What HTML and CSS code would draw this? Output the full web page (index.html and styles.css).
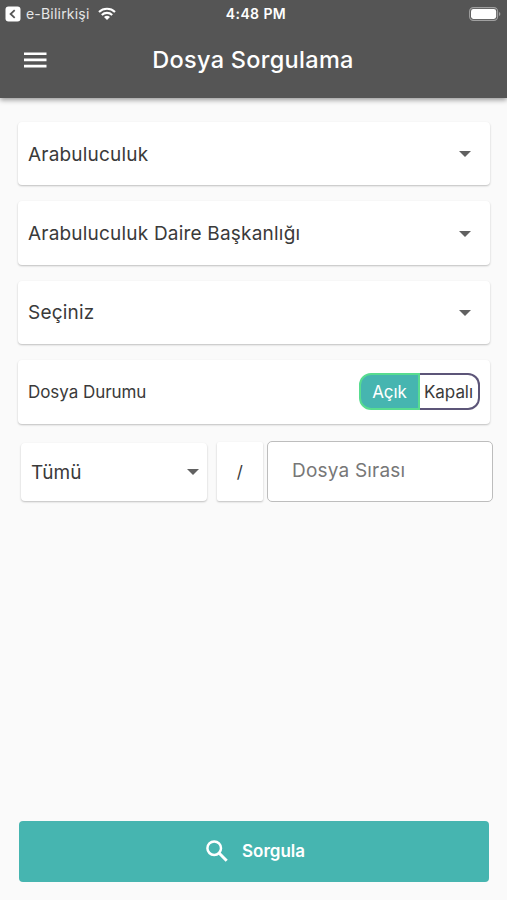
FILE: index.html
```
<!DOCTYPE html>
<html lang="tr">
<head>
    <meta charset="UTF-8">
    <meta name="viewport" content="width=device-width, initial-scale=1.0">
    <title>Dosya Sorgulama</title>
    <link rel="stylesheet" href="styles.css">
</head>
<body>
    <!-- Header -->
    <header class="header">
        <div class="status-bar">
            <div class="status-left">
                <svg class="back-icon" width="16" height="16" viewBox="0 0 16 16">
                    <rect x="0.5" y="0.5" width="15" height="15" rx="3" fill="#fff"/>
                    <path d="M9.7 4.2L5.6 8l4.1 3.8" fill="none" stroke="#555" stroke-width="1.8"/>
                </svg>
                <span class="back-app">e-Bilirkişi</span>
                <svg class="wifi-icon" width="18" height="14" viewBox="0 0 18 14">
                    <path d="M1 5a11.6 11.6 0 0 1 16 0M3.8 8a7.5 7.5 0 0 1 10.4 0" fill="none" stroke="#fff" stroke-width="2.1"/>
                    <path d="M9 13L6 10.1a4.4 4.4 0 0 1 6 0z" fill="#fff"/>
                </svg>
            </div>
            <span class="clock">4:48 PM</span>
            <svg class="battery-icon" width="32" height="14" viewBox="0 0 32 14">
                <rect x="0.6" y="0.6" width="28" height="12.8" rx="3.8" fill="none" stroke="#a0a0a0" stroke-width="1.1"/>
                <rect x="2" y="2" width="25.2" height="10" rx="2.4" fill="#fff"/>
                <path d="M30 5v4q1.4-.6 1.4-2T30 5z" fill="#a0a0a0"/>
            </svg>
        </div>
        <div class="app-bar">
            <svg class="menu-icon" width="24" height="16" viewBox="0 0 24 16">
                <path d="M1 1.7h22.5M1 7.9h22.5M1 14.1h22.5" stroke="#fff" stroke-width="2.6"/>
            </svg>
            <h1 class="title">Dosya Sorgulama</h1>
        </div>
    </header>

    <!-- Search Form -->
    <main class="form">
        <div class="card">
            <span>Arabuluculuk</span>
            <svg class="arrow" width="12" height="6" viewBox="0 0 12 6"><path d="M0 0h12L6 6z" fill="#616161"/></svg>
        </div>
        <div class="card">
            <span>Arabuluculuk Daire Başkanlığı</span>
            <svg class="arrow" width="12" height="6" viewBox="0 0 12 6"><path d="M0 0h12L6 6z" fill="#616161"/></svg>
        </div>
        <div class="card">
            <span>Seçiniz</span>
            <svg class="arrow" width="12" height="6" viewBox="0 0 12 6"><path d="M0 0h12L6 6z" fill="#616161"/></svg>
        </div>
        <div class="card status-card">
            <span class="status-label">Dosya Durumu</span>
            <div class="toggle">
                <span class="toggle-item active">Açık</span>
                <span class="toggle-item">Kapalı</span>
            </div>
        </div>
        <div class="file-row">
            <div class="card year">
                <span>Tümü</span>
                <svg class="arrow" width="12" height="6" viewBox="0 0 12 6"><path d="M0 0h12L6 6z" fill="#616161"/></svg>
            </div>
            <div class="card slash">/</div>
            <div class="file-input">Dosya Sırası</div>
        </div>
    </main>

    <!-- Submit -->
    <div class="submit">
        <svg class="search-icon" width="22" height="22" viewBox="0 0 22 22">
            <circle cx="8.2" cy="8.2" r="6.8" fill="none" stroke="#fff" stroke-width="2.5"/>
            <path d="M13 13l7.7 7.7" stroke="#fff" stroke-width="3"/>
        </svg>
        <span>Sorgula</span>
    </div>
</body>
</html>
```

FILE: styles.css
```
* {
    box-sizing: border-box;
}
body {
    margin: 0;
    height: 900px;
    display: flex;
    flex-direction: column;
    background: #fafafa;
    color: #3a3a3a;
    font-family: Inter, "Liberation Sans", sans-serif;
    font-size: 19px;
    overflow: hidden;
}
.header {
    height: 98px;
    background: #555;
    color: #fff;
    box-shadow: 0 2px 5px rgba(0, 0, 0, 0.4);
}
.status-bar {
    display: grid;
    grid-template-columns: 1fr auto 1fr;
    align-items: center;
    height: 27px;
    padding: 0 6px 0 5px;
}
.status-left {
    display: flex;
    align-items: center;
}
.back-app {
    margin: 0 9px 0 5px;
    font-size: 14px;
    color: #e6e6e6;
    letter-spacing: 0.2px;
}
.clock {
    padding-left: 6px;
    font-size: 14px;
    font-weight: 600;
    letter-spacing: 0.4px;
}
.battery-icon {
    justify-self: end;
}
.app-bar {
    display: grid;
    grid-template-columns: 1fr auto 1fr;
    align-items: center;
    height: 65px;
    padding: 0 24px 0 23px;
}
.title {
    margin: 0;
    font-size: 23.5px;
    font-weight: 500;
    letter-spacing: 0.3px;
}
.form {
    flex: 1;
    padding: 24px 14px 0 18px;
}
.card {
    display: flex;
    align-items: center;
    justify-content: space-between;
    height: 63.4px;
    margin: 0 3px 16px 0;
    padding: 1px 19px 0 10px;
    background: #fff;
    border-radius: 4px;
    box-shadow: 0 1px 2px rgba(0, 0, 0, 0.24);
    letter-spacing: 0.2px;
}
.status-card {
    padding: 0 10px 0 10px;
}
.status-label {
    font-size: 17px;
    letter-spacing: -0.05px;
}
.toggle {
    display: flex;
    width: 121px;
    height: 37px;
    font-size: 17px;
    letter-spacing: -0.05px;
}
.toggle-item {
    display: flex;
    align-items: center;
    justify-content: center;
    width: 60px;
    padding-right: 1px;
    border: 2px solid #5c5578;
    border-left: none;
    border-radius: 0 12px 12px 0;
}
.toggle-item.active {
    width: 61px;
    padding-right: 0;
    background: #46b5b0;
    color: #fff;
    border: 2px solid #58dc90;
    border-radius: 12px 0 0 12px;
}
.file-row {
    display: flex;
    align-items: center;
    margin-top: 17.5px;
    padding-left: 3px;
}
.year {
    width: 186px;
    height: 58px;
    margin: 0 10px 0 0;
    padding: 1px 8px 0 10px;
    letter-spacing: 0;
}
.slash {
    width: 46px;
    height: 59px;
    margin: 0 4px 0 0;
    padding: 0;
    justify-content: center;
    border-radius: 2px;
    font-size: 17px;
}
.file-input {
    display: flex;
    align-items: center;
    width: 226px;
    height: 61px;
    padding: 0 24px 2px;
    background: #fff;
    border: 1px solid #bdbdbd;
    border-radius: 5px;
    color: #777;
    letter-spacing: 0.2px;
}
.submit {
    display: flex;
    align-items: center;
    justify-content: center;
    gap: 14px;
    height: 61px;
    margin: 0 18px 18.5px 19px;
    padding-left: 3px;
    background: #46b5b0;
    color: #fff;
    border-radius: 4px;
    font-size: 17px;
    font-weight: 600;
}
```
